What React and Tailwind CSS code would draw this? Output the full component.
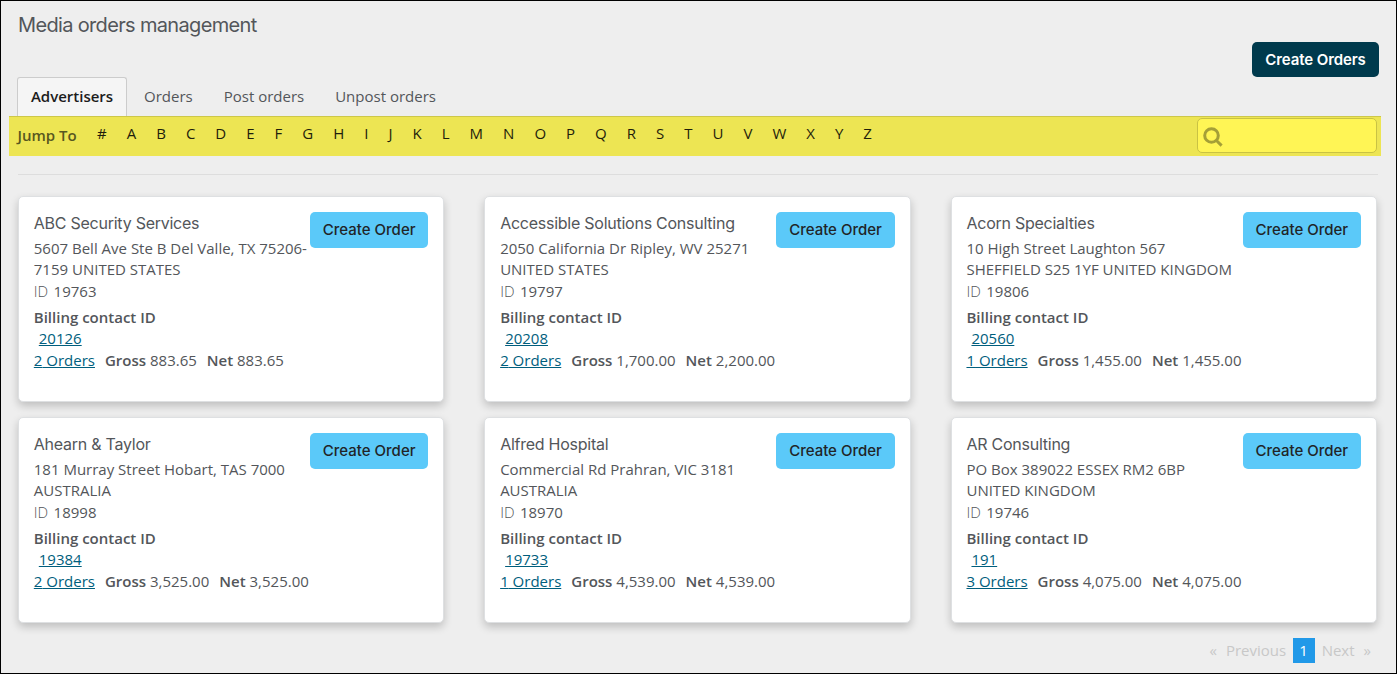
import { useState } from 'react';

const LETTERS = '#ABCDEFGHIJKLMNOPQRSTUVWXYZ'.split('');

const TABS = ['Advertisers', 'Orders', 'Post orders', 'Unpost orders'];

const ADVERTISERS = [
    {
        id: '19763',
        name: 'ABC Security Services',
        address: ['5607 Bell Ave Ste B Del Valle, TX 75206-', '7159 UNITED STATES'],
        contact: '20126',
        orders: 2,
        gross: '883.65',
        net: '883.65',
    },
    {
        id: '19797',
        name: 'Accessible Solutions Consulting',
        address: ['2050 California Dr Ripley, WV 25271', 'UNITED STATES'],
        contact: '20208',
        orders: 2,
        gross: '1,700.00',
        net: '2,200.00',
    },
    {
        id: '19806',
        name: 'Acorn Specialties',
        address: ['10 High Street Laughton 567', 'SHEFFIELD S25 1YF UNITED KINGDOM'],
        contact: '20560',
        orders: 1,
        gross: '1,455.00',
        net: '1,455.00',
    },
    {
        id: '18998',
        name: 'Ahearn & Taylor',
        address: ['181 Murray Street Hobart, TAS 7000', 'AUSTRALIA'],
        contact: '19384',
        orders: 2,
        gross: '3,525.00',
        net: '3,525.00',
    },
    {
        id: '18970',
        name: 'Alfred Hospital',
        address: ['Commercial Rd Prahran, VIC 3181', 'AUSTRALIA'],
        contact: '19733',
        orders: 1,
        gross: '4,539.00',
        net: '4,539.00',
    },
    {
        id: '19746',
        name: 'AR Consulting',
        address: ['PO Box 389022 ESSEX RM2 6BP', 'UNITED KINGDOM'],
        contact: '191',
        orders: 3,
        gross: '4,075.00',
        net: '4,075.00',
    },
];

const App = () => {
    const [activeTab, setActiveTab] = useState('Advertisers');

    return (
        <div className="w-[1397px] h-[674px] overflow-hidden border border-black bg-[#eeeeee] font-['Open_Sans',sans-serif] text-[15px] text-[#53565a]">
            <header className="flex justify-between h-[76px] pl-[17px] pr-[17px]">
                <h1 className="pt-[10px] font-['Inter',sans-serif] text-[20px] leading-[28px] tracking-[-0.66px]">
                    Media orders management
                </h1>
                <button className="mt-[41px] h-[35px] w-[127px] rounded-[5px] bg-[#003a4d] pt-[1px] font-['Inter',sans-serif] text-[15px] tracking-[-0.1px] font-semibold text-white whitespace-nowrap">
                    Create Orders
                </button>
            </header>

            <nav className="flex h-[39px] pl-4">
                {TABS.map((tab) => (
                    <Tab key={tab} label={tab} active={tab === activeTab} onClick={() => setActiveTab(tab)} />
                ))}
            </nav>

            <div className="ml-2 mr-[15px] flex h-10 justify-between bg-[#ede553]">
                <div className="flex grow border-t border-[#cdc748] pl-[8.5px]">
                    <span className="w-[69.5px] pt-[8px] font-semibold leading-5 text-[#585720]">Jump To</span>
                    <div className="flex pt-[6px]">
                        {LETTERS.map((letter) => (
                            <a key={letter} href="#" className="px-[10px] leading-5 text-[#1f1e0b]">
                                {letter}
                            </a>
                        ))}
                    </div>
                </div>
                <div className="border-t border-[#cdc748] pr-1 pt-[1px]">
                    <div className="flex h-[35px] w-[180px] items-center rounded-[5px] border border-[#c9c244] bg-[#fff555] pl-[5px] pt-[2px]">
                        <SearchIcon />
                    </div>
                </div>
            </div>

            <hr className="ml-[17px] mr-[18px] mt-[18px] border-t border-[#dddddd]" />

            <main className="ml-[17px] mr-[19px] mt-[21px] grid grid-cols-3 gap-x-10 gap-y-[15px]">
                {ADVERTISERS.map((advertiser) => (
                    <AdvertiserCard key={advertiser.id} advertiser={advertiser} />
                ))}
            </main>

            <footer className="mt-[15px] flex h-[25px] justify-end pr-[25px] leading-[25px] text-[#c8c8c8]">
                <span>«</span>
                <span className="ml-[9px]">Previous</span>
                <span className="ml-[6.5px] mr-[7px] w-[22px] bg-[#2199e8] text-center text-white">1</span>
                <span>Next</span>
                <span className="ml-[9px]">»</span>
            </footer>
        </div>
    );
};

const Tab = ({ label, active, onClick }) => (
    <button
        onClick={onClick}
        className={
            active
                ? 'mr-[1px] w-[110px] rounded-t-[3px] border border-b-0 border-[#cccccc] bg-[#f5f5f5] pb-[1px] font-semibold text-[#1c1c1c]'
                : 'pl-4 pr-[15px]'
        }
    >
        {label}
    </button>
);

const AdvertiserCard = ({ advertiser }) => {
    const { name, address, id, contact, orders, gross, net } = advertiser;

    return (
        <div className="flex h-[206px] justify-between rounded-[5px] border border-[#dee0e2] bg-white pl-[14.8px] pr-[15px] shadow-[0_4px_8px_rgba(0,0,0,0.2)]">
            <div className="w-[274px] whitespace-nowrap pt-[14px]">
                <h2 className="font-['Inter',sans-serif] text-[16px] leading-[24px] tracking-[-0.25px]">{name}</h2>
                <p className="mt-[3px] leading-[21px]">
                    {address[0]}
                    <br />
                    {address[1]}
                </p>
                <p className="leading-[22px]">
                    <span className="mr-[1.5px] font-light">ID</span> {id}
                </p>
                <p className="mt-[5px] font-semibold leading-[21px]">Billing contact ID</p>
                <p className="pl-[5px] leading-[21px]">
                    <Link>{contact}</Link>
                </p>
                <p className="flex gap-[10px] leading-[23px]">
                    <Link>{orders} Orders</Link>
                    <span>
                        <b className="font-semibold">Gross</b> {gross}
                    </span>
                    <span>
                        <b className="font-semibold">Net</b> {net}
                    </span>
                </p>
            </div>
            <button className="mt-[15px] h-9 w-[118.3px] shrink-0 rounded-[5px] bg-[#5bc9f9] font-['Inter',sans-serif] text-[15px] font-medium text-[#212427] whitespace-nowrap">
                Create Order
            </button>
        </div>
    );
};

const Link = ({ children }) => (
    <a href="#" className="text-[#005e7d] underline">
        {children}
    </a>
);

const SearchIcon = () => (
    <svg className="h-5 w-5" viewBox="0 0 20 20" fill="none" stroke="#a59f37" strokeWidth="3">
        <circle cx="8.5" cy="8.5" r="6.8" />
        <path d="M13.2 13.2L18.6 18.6" />
    </svg>
);

export default App;
